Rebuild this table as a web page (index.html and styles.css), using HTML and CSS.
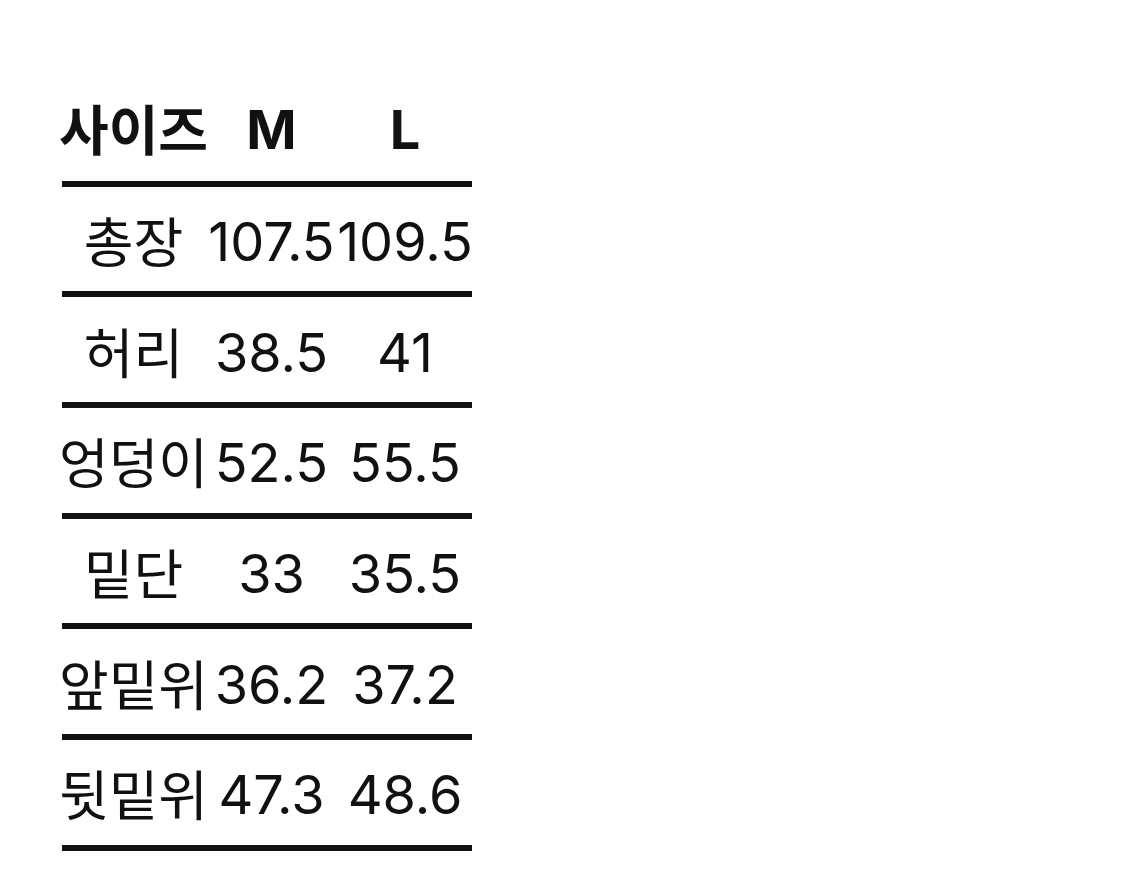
FILE: index.html
```html
<!DOCTYPE html>
<html lang="ko">
<head>
<meta charset="utf-8">
<link rel="stylesheet" href="styles.css">
<title>사이즈</title>
</head>
<body>
<div class="size-table">
  <div class="row head">
    <div class="cell label">사이즈</div>
    <div class="cell num">M</div>
    <div class="cell num">L</div>
  </div>
  <div class="row">
    <div class="cell label">총장</div>
    <div class="cell num">107.5</div>
    <div class="cell num">109.5</div>
  </div>
  <div class="row">
    <div class="cell label">허리</div>
    <div class="cell num">38.5</div>
    <div class="cell num">41</div>
  </div>
  <div class="row">
    <div class="cell label">엉덩이</div>
    <div class="cell num">52.5</div>
    <div class="cell num">55.5</div>
  </div>
  <div class="row">
    <div class="cell label">밑단</div>
    <div class="cell num">33</div>
    <div class="cell num">35.5</div>
  </div>
  <div class="row">
    <div class="cell label">앞밑위</div>
    <div class="cell num">36.2</div>
    <div class="cell num">37.2</div>
  </div>
  <div class="row">
    <div class="cell label">뒷밑위</div>
    <div class="cell num">47.3</div>
    <div class="cell num">48.6</div>
  </div>
</div>
</body>
</html>
```
FILE: styles.css
```css
html, body {
  margin: 0;
  padding: 0;
  background: #ffffff;
}
body {
  color: #111111;
  font-family: "Inter", "Noto Sans CJK KR", sans-serif;
}
.size-table {
  margin: 76px 0 0 62px;
  width: 410px;
}
.row {
  display: grid;
  grid-template-columns: 143px 133px 134px;
  height: 104.67px;
  border-bottom: 6px solid #111111;
  align-items: center;
}
.cell {
  display: flex;
  justify-content: center;
  white-space: nowrap;
  line-height: 1;
}
.label {
  font-family: "Noto Sans CJK KR", sans-serif;
  font-size: 54px;
  letter-spacing: 0;
  padding-top: 2px;
}
.num {
  font-size: 54px;
  padding-top: 6px;
}
.head .label {
  font-weight: 700;
  padding-top: 0;
}
.head .num {
  font-weight: 700;
  font-size: 54px;
  padding-top: 4px;
}
```
